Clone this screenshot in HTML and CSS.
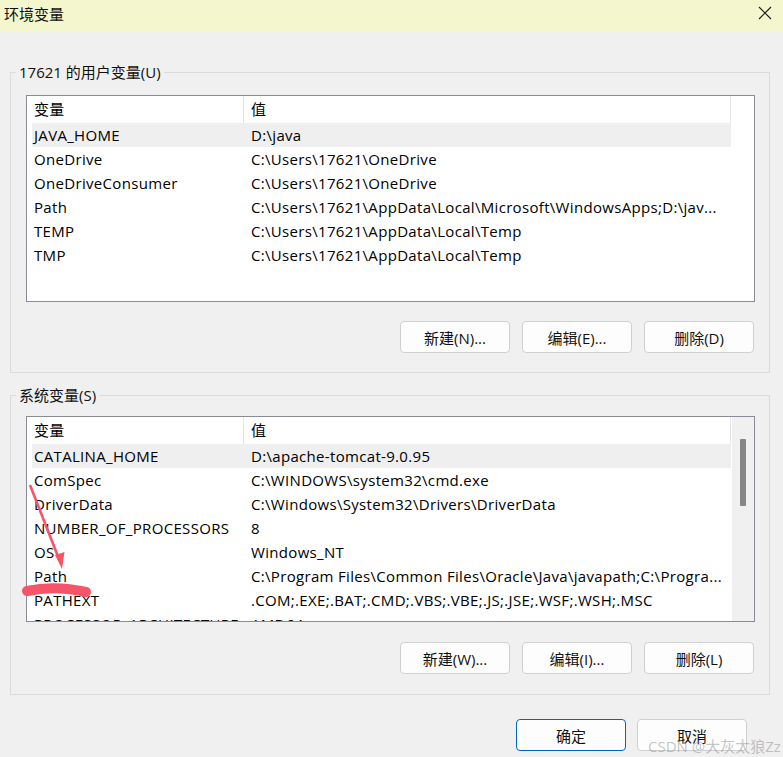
FILE: index.html
```html
<!DOCTYPE html>
<html lang="zh-CN">

<head>
    <meta charset="UTF-8">
    <title>环境变量</title>
    <link rel="stylesheet" href="styles.css">
</head>

<body>
    <div class="titlebar">
        <span class="title">环境变量</span>
        <svg class="close" width="14" height="14" viewBox="0 0 14 14">
            <path d="M1 1 L13 13 M13 1 L1 13" stroke="#1a1a1a" stroke-width="1.1" fill="none" />
        </svg>
    </div>

    <div class="dialog">
        <!-- 用户变量 -->
        <fieldset class="group group-user">
            <legend>17621 的用户变量(U)</legend>
            <div class="list">
                <div class="rows">
                    <div class="row head">
                        <div class="cell">变量</div>
                        <div class="cell">值</div>
                    </div>
                    <div class="row selected">
                        <div class="cell">JAVA_HOME</div>
                        <div class="cell">D:\java</div>
                    </div>
                    <div class="row">
                        <div class="cell">OneDrive</div>
                        <div class="cell">C:\Users\17621\OneDrive</div>
                    </div>
                    <div class="row">
                        <div class="cell">OneDriveConsumer</div>
                        <div class="cell">C:\Users\17621\OneDrive</div>
                    </div>
                    <div class="row">
                        <div class="cell">Path</div>
                        <div class="cell">C:\Users\17621\AppData\Local\Microsoft\WindowsApps;D:\jav...</div>
                    </div>
                    <div class="row">
                        <div class="cell">TEMP</div>
                        <div class="cell">C:\Users\17621\AppData\Local\Temp</div>
                    </div>
                    <div class="row">
                        <div class="cell">TMP</div>
                        <div class="cell">C:\Users\17621\AppData\Local\Temp</div>
                    </div>
                </div>
            </div>
            <div class="btns">
                <button class="btn">新建(N)...</button>
                <button class="btn">编辑(E)...</button>
                <button class="btn">删除(D)</button>
            </div>
        </fieldset>

        <!-- 系统变量 -->
        <fieldset class="group group-sys">
            <legend>系统变量(S)</legend>
            <div class="list">
                <div class="rows">
                    <div class="row head">
                        <div class="cell">变量</div>
                        <div class="cell">值</div>
                    </div>
                    <div class="row selected">
                        <div class="cell">CATALINA_HOME</div>
                        <div class="cell">D:\apache-tomcat-9.0.95</div>
                    </div>
                    <div class="row">
                        <div class="cell">ComSpec</div>
                        <div class="cell">C:\WINDOWS\system32\cmd.exe</div>
                    </div>
                    <div class="row">
                        <div class="cell">DriverData</div>
                        <div class="cell">C:\Windows\System32\Drivers\DriverData</div>
                    </div>
                    <div class="row">
                        <div class="cell">NUMBER_OF_PROCESSORS</div>
                        <div class="cell">8</div>
                    </div>
                    <div class="row">
                        <div class="cell">OS</div>
                        <div class="cell">Windows_NT</div>
                    </div>
                    <div class="row">
                        <div class="cell">Path</div>
                        <div class="cell">C:\Program Files\Common Files\Oracle\Java\javapath;C:\Progra...</div>
                    </div>
                    <div class="row">
                        <div class="cell">PATHEXT</div>
                        <div class="cell">.COM;.EXE;.BAT;.CMD;.VBS;.VBE;.JS;.JSE;.WSF;.WSH;.MSC</div>
                    </div>
                    <div class="row">
                        <div class="cell">PROCESSOR_ARCHITECTURE</div>
                        <div class="cell">AMD64</div>
                    </div>
                </div>
                <div class="scrollbar">
                    <div class="thumb"></div>
                </div>
            </div>
            <div class="btns">
                <button class="btn">新建(W)...</button>
                <button class="btn">编辑(I)...</button>
                <button class="btn">删除(L)</button>
            </div>
        </fieldset>

        <div class="footer">
            <button class="btn primary">确定</button>
            <button class="btn">取消</button>
        </div>
    </div>

    <!-- 截图上的红色标注 -->
    <svg class="mark" width="120" height="130" viewBox="0 0 120 130">
        <path d="M10 4 L39 78" stroke="#f65468" stroke-width="2.6" fill="none" />
        <polygon points="42,88 35,74 44.5,71" fill="#f65468" />
        <path d="M7 110 Q 35 104 66 111" stroke="#f65468" stroke-width="10" stroke-linecap="round" fill="none" />
    </svg>

    <div class="watermark">CSDN @大灰太狼Zz</div>
</body>

</html>
```

FILE: styles.css
```css
body {
    margin: 0;
    width: 783px;
    height: 757px;
    background-color: #f0f0f0;
    font-family: "Open Sans", "Noto Sans CJK SC", sans-serif;
    font-size: 15px;
    color: #111;
    overflow: hidden;
    position: relative;
}

.titlebar {
    height: 32px;
    background-color: #f4f6ce;
    display: flex;
    justify-content: space-between;
    align-items: flex-start;
}

.title {
    margin: 3px 0 0 4px;
    font-size: 15px;
    color: #111;
}

.close {
    margin: 6px 11px 0 0;
}

.dialog {
    padding-top: 30px;
}

.group {
    margin: 0 13px 0 10px;
    padding: 13px 14px 19px 15px;
    border: 1px solid #dcdcdc;
    border-radius: 0;
}

.group-sys {
    margin-top: 12px;
    padding-top: 11px;
    padding-bottom: 20px;
}

.group legend {
    padding: 0 3px;
    margin-left: -10px;
    line-height: 20px;
    font-size: 15px;
}

.list {
    height: 205px;
    border: 1px solid #8b8b96;
    background-color: #fff;
    padding-left: 5px;
    display: flex;
    overflow: hidden;
}

.group-sys .list {
    height: 204px;
}

.rows {
    width: 699px;
}

.row {
    display: grid;
    grid-template-columns: 212px 1fr;
    height: 24px;
    line-height: 24px;
}

.row .cell {
    padding-left: 2px;
    white-space: nowrap;
    overflow: hidden;
    letter-spacing: 0.32px;
    color: #000;
}

.row .cell + .cell {
    padding-left: 7px;
}

.head {
    height: 27px;
    line-height: 27px;
    border-right: 1px solid #e5e5e5;
}

.head .cell:first-child {
    border-right: 1px solid #e5e5e5;
}

.selected {
    background-color: #efefef;
}

.scrollbar {
    width: 22px;
    margin-left: 1px;
    background-color: #f0f0f0;
}

.thumb {
    width: 6px;
    height: 67px;
    margin: 22px 0 0 8px;
    background-color: #868686;
    border-radius: 1px;
}

.btns {
    display: flex;
    justify-content: flex-end;
    gap: 12px;
    margin-top: 19px;
    padding-right: 1px;
}

.group-sys .btns {
    margin-top: 20px;
}

.btn {
    width: 110px;
    height: 32px;
    background-color: #fdfdfd;
    border: 1px solid #d0d0d0;
    border-radius: 4px;
    font-family: "Open Sans", "Noto Sans CJK SC", sans-serif;
    font-size: 15px;
    color: #111;
    padding: 0;
}

.primary {
    border-color: #0067c0;
}

.footer {
    display: flex;
    justify-content: flex-end;
    gap: 11px;
    margin-top: 24px;
    padding-right: 36px;
}

.mark {
    position: absolute;
    left: 20px;
    top: 481px;
}

.watermark {
    position: absolute;
    left: 648px;
    top: 735px;
    font-size: 15px;
    color: rgba(140, 140, 140, 0.5);
    white-space: nowrap;
}
```
